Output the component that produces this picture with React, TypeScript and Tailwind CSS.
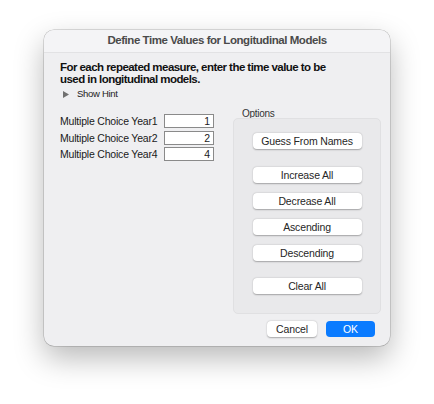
import React from "react";

const font = { fontFamily: '"Liberation Sans", Arial, sans-serif' };

function Btn({ label, className = "" }: { label: string; className?: string }) {
  return (
    <div
      className={
        "h-[16px] w-[109px] rounded-[4px] bg-white text-[10.5px] tracking-[-0.15px] leading-[16px] text-center text-[#262626] shadow-[0_0.5px_1.5px_rgba(0,0,0,0.3)] " +
        className
      }
    >
      {label}
    </div>
  );
}

function Row({ label, value }: { label: string; value: string }) {
  return (
    <div className="flex items-center h-[16.5px]">
      <div className="w-[104px] text-[10.5px] tracking-[-0.2px] text-[#1a1a1a] leading-[14px]">{label}</div>
      <div className="w-[50px] h-[14px] bg-white border border-[#8a8a8a] text-right pr-[3px] text-[10.5px] leading-[12px] text-[#1a1a1a]">
        {value}
      </div>
    </div>
  );
}

export default function App() {
  return (
    <div className="w-[434px] h-[404px] bg-white pl-[44px] pt-[30px]" style={font}>
      <div className="w-[346px] h-[316px] rounded-[10px] bg-[#efeff1] shadow-[0_12px_30px_rgba(0,0,0,0.28),0_0_0_0.5px_rgba(0,0,0,0.25)] flex flex-col overflow-hidden">
        <div className="h-[23px] shrink-0 bg-[#f4f4f6] border-b border-[#e2e2e4] flex items-center justify-center text-[11.5px] tracking-[-0.45px] font-bold text-[#4a4a4a]">
          Define Time Values for Longitudinal Models
        </div>
        <div className="pl-[16px] pt-[8px] flex flex-col">
          <div className="text-[11.5px] tracking-[-0.55px] font-bold leading-[12px] text-[#111]">
            For each repeated measure, enter the time value to be
            <br />
            used in longitudinal models.
          </div>
          <div className="flex items-center mt-[2px] h-[14px] text-[9.5px] tracking-[-0.3px] text-[#222]">
            <svg width="6" height="7" viewBox="0 0 6 7" className="ml-[3px] mr-[8px]">
              <path d="M0 0 L6 3.5 L0 7 Z" fill="#707070" />
            </svg>
            Show Hint
          </div>
          <div className="flex mt-[6px]">
            <div className="flex flex-col pt-[6px] w-[173px]">
              <Row label="Multiple Choice Year1" value="1" />
              <Row label="Multiple Choice Year2" value="2" />
              <Row label="Multiple Choice Year4" value="4" />
            </div>
            <div className="flex flex-col">
              <div className="text-[10px] tracking-[-0.3px] leading-[12px] text-[#333] pl-[9px] mt-[1px]">Options</div>
              <div className="w-[148px] h-[196px] -mt-[2px] rounded-[5px] bg-[#e9e9eb] border border-[#e0e0e2] flex flex-col items-center pt-[14px]">
                <Btn label="Guess From Names" />
                <Btn label="Increase All" className="mt-[18px]" />
                <Btn label="Decrease All" className="mt-[10px]" />
                <Btn label="Ascending" className="mt-[10px]" />
                <Btn label="Descending" className="mt-[10px]" />
                <Btn label="Clear All" className="mt-[17px]" />
              </div>
            </div>
          </div>
          <div className="flex justify-end gap-[9px] pr-[15px] mt-[7px]">
            <div className="w-[50px] h-[16px] rounded-[4px] bg-white text-[10.5px] tracking-[-0.15px] leading-[16px] text-center text-[#262626] shadow-[0_0.5px_1.5px_rgba(0,0,0,0.3)]">
              Cancel
            </div>
            <div className="w-[49px] h-[16px] rounded-[4px] bg-[#0a7bff] text-[10.5px] leading-[16px] text-center text-white">
              OK
            </div>
          </div>
        </div>
      </div>
    </div>
  );
}
